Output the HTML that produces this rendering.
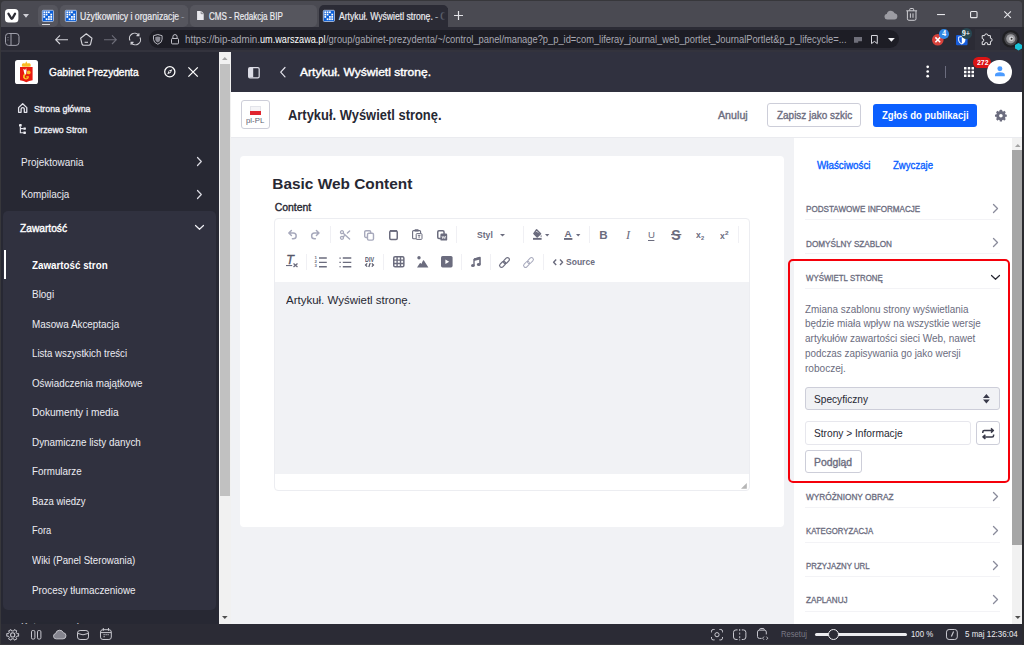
<!DOCTYPE html>
<html lang="pl">
<head>
<meta charset="utf-8">
<title>Artykuł. Wyświetl stronę.</title>
<style>
*{box-sizing:border-box;margin:0;padding:0}
html,body{width:1024px;height:645px;overflow:hidden;background:#37373b}
body{position:relative;font-family:"Liberation Sans",sans-serif;font-size:12px;color:#272833}
.a{position:absolute}
.t{position:absolute;white-space:pre;line-height:1;transform-origin:0 0}
svg{position:absolute;overflow:visible}
/* chrome */
#tabbar{left:1px;top:1.4px;width:1021.4px;height:25.6px;background:#4a4a52;border-radius:3.5px 3.5px 0 0}
#addr{left:1px;top:27px;width:1022px;height:24px;background:#2b2b35}
#addrline{left:1px;top:49.8px;width:1022px;height:1.8px;background:#33333d}
#status{left:1px;top:624px;width:1022px;height:20px;background:#2b2b35}
.tab{position:absolute;top:4.8px;height:22.1px;background:#56565e;border-radius:5px}
.tab.on{background:#2b2b35;border-radius:5px 5px 0 0;height:23px}
#url{left:149px;top:30px;width:750px;height:18px;border-radius:9px;background:#1d1d25}
/* page */
#side{left:1px;top:51.5px;width:218px;height:572.5px;background:#272833;overflow:hidden}
#sidepanel{left:3.4px;top:211px;width:212.6px;height:399px;background:#30313f;border-radius:5px}
#sidemark{left:3.5px;top:250.4px;width:2.5px;height:28.6px;background:#fff}
#sidescroll{left:219px;top:51.5px;width:12px;height:572.5px;background:#f1f1f1}
#sidethumb{left:219.8px;top:63.7px;width:10.2px;height:432.3px;background:#c1c1c1}
#ctl{left:231px;top:51.5px;width:792px;height:40.2px;background:#30313f}
#tool{left:231px;top:91.7px;width:792px;height:46.4px;background:#fff;border-bottom:.6px solid #eaebef}
#bg{left:231px;top:138px;width:563px;height:486px;background:#f1f2f5}
#card{left:240px;top:156px;width:544px;height:370.6px;background:#fff;border-radius:4px}
#right{left:794px;top:138px;width:218.3px;height:486px;background:#fff}
#rscroll{left:1012.3px;top:138px;width:9.9px;height:486px;background:#f1f1f1}
#rthumb{left:1012.4px;top:150.3px;width:9.8px;height:395.2px;background:#a6a6a6}
.btn{position:absolute;border:1px solid #cdced9;border-radius:3px;background:#fff}
.sep{position:absolute;left:805.4px;width:195px;height:1px;background:#f3f3f6}
.vd{position:absolute;width:1px;height:16px;background:#e7e7ed}
#editor{left:274px;top:217.5px;width:475.5px;height:273.8px;border:1px solid #ecedf1;border-radius:4px;background:#fff}
#edarea{left:275px;top:282px;width:473.5px;height:191.6px;background:#f1f2f5}
#red{left:788.2px;top:258.9px;width:221.6px;height:224.3px;border:2.4px solid #f5000a;border-radius:5px}
</style>
</head>
<body>
<!-- browser chrome -->
<div id="tabbar" class="a"></div>
<div id="addr" class="a"></div>
<div id="addrline" class="a"></div>
<div id="status" class="a"></div>
<div class="tab" style="left:38px;width:20px"></div>
<div class="tab" style="left:60px;width:128px"></div>
<div class="tab" style="left:190px;width:127px"></div>
<div class="tab on" style="left:319px;width:129px"></div>
<div id="url" class="a"></div>
<svg style="left:4.9px;top:8.8px" width="13.4" height="13.6" viewBox="0 0 13.4 13.6"><rect width="13.4" height="13.6" rx="3.6" fill="#fff"/><path d="M3.4 4.6 L6.4 9.6 Q6.9 10.1 7.4 9.4 L10.1 4.6" fill="none" stroke="#2e2e36" stroke-width="2.2" stroke-linecap="round" stroke-linejoin="round"/></svg>
<svg style="left:23.3px;top:14px" width="6" height="3.8" viewBox="0 0 6 3.8"><path d="M0 0H6L3 3.8Z" fill="#d0d0d6"/></svg>
<svg style="left:42.2px;top:9.7px" width="11.8" height="11.8" viewBox="0 0 11.8 11.8"><rect x=".3" y=".3" width="11.200000000000001" height="11.200000000000001" rx="1" fill="#0b5fd8" stroke="#d6e0f3" stroke-width=".7"/><rect x="1.40" y="1.40" width="1.76" height="1.76" fill="#fff"/><rect x="3.71" y="1.40" width="1.76" height="1.76" fill="#fff"/><rect x="6.02" y="1.40" width="1.76" height="1.76" fill="#fff"/><rect x="1.40" y="3.71" width="1.76" height="1.76" fill="#fff"/><rect x="3.71" y="3.71" width="1.76" height="1.76" fill="#fff"/><rect x="8.34" y="3.71" width="1.76" height="1.76" fill="#fff"/><rect x="1.40" y="6.02" width="1.76" height="1.76" fill="#fff"/><rect x="6.02" y="6.02" width="1.76" height="1.76" fill="#fff"/><rect x="8.34" y="6.02" width="1.76" height="1.76" fill="#fff"/><rect x="3.71" y="8.34" width="1.76" height="1.76" fill="#fff"/><rect x="6.02" y="8.34" width="1.76" height="1.76" fill="#fff"/><rect x="8.34" y="8.34" width="1.76" height="1.76" fill="#fff"/></svg>
<div class="a" style="left:41.6px;top:24.1px;width:8.6px;height:1.3px;background:#dcdce0"></div>
<svg style="left:64.5px;top:9.7px" width="11.8" height="11.8" viewBox="0 0 11.8 11.8"><rect x=".3" y=".3" width="11.200000000000001" height="11.200000000000001" rx="1" fill="#0b5fd8" stroke="#d6e0f3" stroke-width=".7"/><rect x="1.40" y="1.40" width="1.76" height="1.76" fill="#fff"/><rect x="3.71" y="1.40" width="1.76" height="1.76" fill="#fff"/><rect x="6.02" y="1.40" width="1.76" height="1.76" fill="#fff"/><rect x="1.40" y="3.71" width="1.76" height="1.76" fill="#fff"/><rect x="3.71" y="3.71" width="1.76" height="1.76" fill="#fff"/><rect x="8.34" y="3.71" width="1.76" height="1.76" fill="#fff"/><rect x="1.40" y="6.02" width="1.76" height="1.76" fill="#fff"/><rect x="6.02" y="6.02" width="1.76" height="1.76" fill="#fff"/><rect x="8.34" y="6.02" width="1.76" height="1.76" fill="#fff"/><rect x="3.71" y="8.34" width="1.76" height="1.76" fill="#fff"/><rect x="6.02" y="8.34" width="1.76" height="1.76" fill="#fff"/><rect x="8.34" y="8.34" width="1.76" height="1.76" fill="#fff"/></svg>
<svg style="left:323.2px;top:9.7px" width="11.8" height="11.8" viewBox="0 0 11.8 11.8"><rect x=".3" y=".3" width="11.200000000000001" height="11.200000000000001" rx="1" fill="#0b5fd8" stroke="#d6e0f3" stroke-width=".7"/><rect x="1.40" y="1.40" width="1.76" height="1.76" fill="#fff"/><rect x="3.71" y="1.40" width="1.76" height="1.76" fill="#fff"/><rect x="6.02" y="1.40" width="1.76" height="1.76" fill="#fff"/><rect x="1.40" y="3.71" width="1.76" height="1.76" fill="#fff"/><rect x="3.71" y="3.71" width="1.76" height="1.76" fill="#fff"/><rect x="8.34" y="3.71" width="1.76" height="1.76" fill="#fff"/><rect x="1.40" y="6.02" width="1.76" height="1.76" fill="#fff"/><rect x="6.02" y="6.02" width="1.76" height="1.76" fill="#fff"/><rect x="8.34" y="6.02" width="1.76" height="1.76" fill="#fff"/><rect x="3.71" y="8.34" width="1.76" height="1.76" fill="#fff"/><rect x="6.02" y="8.34" width="1.76" height="1.76" fill="#fff"/><rect x="8.34" y="8.34" width="1.76" height="1.76" fill="#fff"/></svg>
<svg style="left:196.8px;top:11.2px" width="6.8" height="8.9" viewBox="0 0 7.2 9.6"><path d="M0 0H4.6L7.2 2.6V9.6H0Z" fill="#e9e9ee"/><path d="M4.4 0.3V2.9H7" fill="none" stroke="#56565e" stroke-width="0.7"/></svg>
<svg style="left:453.5px;top:11.2px" width="9" height="9" viewBox="0 0 9 9"><path d="M4.5 0V9M0 4.5H9" stroke="#e4e4e8" stroke-width="1.2" fill="none"/></svg>
<svg style="left:883.5px;top:10.2px" width="14" height="10" viewBox="0 0 14 10.4"><path d="M3.2 10a2.9 2.9 0 0 1-.6-5.75a4.3 4.3 0 0 1 8.2-.9a3.35 3.35 0 0 1-.3 6.65Z" fill="#9c9ca3"/></svg>
<svg style="left:906.3px;top:8px" width="11.4" height="12.8" viewBox="0 0 11.4 12.8" fill="none" stroke="#cfcfd4" stroke-width="1"><path d="M0.3 2.8H11.1M3.8 2.6V1.2Q3.8 .5 4.5 .5H6.9Q7.6 .5 7.6 1.2V2.6M1.4 3V10.8Q1.4 12.3 2.9 12.3H8.5Q10 12.3 10 10.8V3M4.4 5.4V9.8M7 5.4V9.8"/></svg>
<svg style="left:937px;top:13.8px" width="8" height="1.2" viewBox="0 0 8 1.2"><rect width="8" height="1.1" fill="#e6e6ea"/></svg>
<svg style="left:970.3px;top:10.8px" width="7.6" height="7.2" viewBox="0 0 7.6 7.2"><rect x=".55" y=".55" width="6.5" height="6.1" rx="1" fill="none" stroke="#e6e6ea" stroke-width="1.1"/></svg>
<svg style="left:1003.9px;top:10.8px" width="7.2" height="7.2" viewBox="0 0 7.2 7.2"><path d="M.3 .3L6.9 6.9M6.9 .3L.3 6.9" stroke="#e6e6ea" stroke-width="1.1" fill="none"/></svg>
<svg style="left:5.4px;top:33px" width="14.5" height="12.9" viewBox="0 0 14.5 12.9" fill="none" stroke="#a2a2ad" stroke-width="1"><rect x=".5" y=".5" width="13.5" height="11.9" rx="3"/><path d="M6 .5V12.4"/><path d="M3 4.2v.8M3 6.6v.8" stroke-width="0.9"/></svg>
<svg style="left:54.8px;top:34.5px" width="13" height="9.4" viewBox="0 0 13 9.4" fill="none" stroke="#d4d4da" stroke-width="1.1"><path d="M13 4.7H.8M5 .4L.7 4.7L5 9"/></svg>
<svg style="left:80px;top:32.8px" width="12.6" height="12.8" viewBox="0 0 12.6 12.8" fill="none" stroke="#d4d4da" stroke-width="1.1"><path d="M6.3 .7L12 5.2L10.6 11Q10.3 12.2 9 12.2H3.6Q2.3 12.2 2 11L.6 5.2Z" stroke-linejoin="round"/><path d="M4.6 9.3H8"/></svg>
<svg style="left:104.3px;top:34.5px" width="13" height="9.4" viewBox="0 0 13 9.4" fill="none" stroke="#6d6d78" stroke-width="1.1"><path d="M0 4.7H12.2M8 .4L12.3 4.7L8 9"/></svg>
<svg style="left:129.3px;top:33.3px" width="12" height="12" viewBox="0 0 12 12" fill="none" stroke="#d4d4da" stroke-width="1.1"><path d="M1 7.6A5.1 5.1 0 0 1 9.6 2.2"/><path d="M11 4.4A5.1 5.1 0 0 1 2.4 9.8"/><path d="M9.9 .2V2.6H7.5M2.1 11.8V9.4H4.5"/></svg>
<svg style="left:153.2px;top:34px" width="9.6" height="10.8" viewBox="0 0 9.6 10.8"><path d="M4.8 .5L9.1 1.7V5.3Q9.1 8.6 4.8 10.3Q.5 8.6 .5 5.3V1.7Z" fill="none" stroke="#b8b8c0" stroke-width="1"/><path d="M4.8 2.4L7.3 3.1V5.4Q7.3 7.4 4.8 8.5Q2.3 7.4 2.3 5.4V3.1Z" fill="#8a8a94"/></svg>
<svg style="left:170.8px;top:33.8px" width="8" height="10.4" viewBox="0 0 8 10.4" fill="none" stroke="#c4c4cc" stroke-width="1"><rect x=".5" y="4.5" width="7" height="5.4" rx="1"/><path d="M1.9 4.5V2.7A2.1 2.1 0 0 1 6.1 2.7V4.5"/></svg>
<svg style="left:854px;top:36.5px" width="8" height="5.8" viewBox="0 0 8 5.8"><path d="M0 0H8V4.2H4.2V5.8H0Z" fill="#6f6f7a"/></svg>
<svg style="left:870.6px;top:34.6px" width="6.8" height="9.4" viewBox="0 0 6.8 9.4"><path d="M.5 .5H6.3V8.6L3.4 6.4L.5 8.6Z" fill="none" stroke="#d8d8de" stroke-width="1"/></svg>
<svg style="left:887.6px;top:38px" width="6.8" height="3.8" viewBox="0 0 6.8 3.8"><path d="M0 0H6.8L3.4 3.8Z" fill="#f2f2f5"/></svg>
<svg style="left:932.2px;top:33.7px" width="11.6" height="11.6" viewBox="0 0 11.6 11.6"><circle cx="5.8" cy="5.8" r="5.8" fill="#d8423b"/><path d="M3.4 3.4L8.2 8.2M8.2 3.4L3.4 8.2" stroke="#fff" stroke-width="1.5" fill="none"/></svg>
<div class="a" style="left:939.4px;top:29px;width:9.6px;height:9.6px;border-radius:50%;background:#3187e4"></div>
<svg style="left:956.4px;top:35px" width="11.6" height="10.2" viewBox="0 0 11.6 10.2"><rect width="11.6" height="10.2" rx="1.2" fill="#175ddc"/><path d="M5.8 1L9.4 1.8V5Q9.4 7.8 5.8 9.4Q2.2 7.8 2.2 5V1.8Z" fill="#fff"/><path d="M5.8 1.9V8.4Q3.1 7.1 3.1 5V2.5Z" fill="#175ddc"/></svg>
<div class="a" style="left:960.9px;top:28.3px;width:11.6px;height:11px;border-radius:50%;background:#274651"></div>
<div class="a" style="left:974.8px;top:28.5px;width:25.4px;height:21.5px;background:#30303a"></div>
<svg style="left:980px;top:33.2px" width="13" height="12.6" viewBox="0 0 13 12.6"><path d="M4.6 2.6A1.7 1.7 0 1 1 8 2.6H10.4V5.2A1.7 1.7 0 1 1 10.4 8.6V11.6H7.6A1.5 1.5 0 1 0 4.8 11.6H2.2V8.8A1.6 1.6 0 1 0 2.2 5.6V2.6Z" fill="none" stroke="#e8e8ec" stroke-width="1" stroke-linejoin="round"/></svg>
<svg style="left:1002.2px;top:29.8px" width="17.6" height="17.6" viewBox="0 0 17.6 17.6"><circle cx="8.8" cy="8.8" r="8.8" fill="#1f1f22"/><circle cx="8.8" cy="8.8" r="6.6" fill="#4a4a4e"/><circle cx="8.8" cy="8.8" r="4.6" fill="#9a9a9e"/><circle cx="9.3" cy="8.8" r="2.3" fill="#d8d8da"/><circle cx="9.6" cy="8.8" r="1" fill="#333"/></svg>
<svg style="left:1014.8px;top:43.4px" width="7" height="7.4" viewBox="0 0 7 7.4"><path d="M3.5 0L7 1.9V5.5L3.5 7.4L0 5.5V1.9Z" fill="#19c3d8"/></svg>
<svg style="left:5.7px;top:628.7px" width="13.4" height="11.8" viewBox="0 0 13.4 11.8" fill="none" stroke="#c9c9d0" stroke-width="1"><path d="M12.62 4.57L12.62 7.23L11.03 7.02L9.94 8.71L10.94 9.85L8.38 11.18L7.79 9.83L5.61 9.83L5.02 11.18L2.46 9.85L3.46 8.71L2.37 7.02L0.78 7.23L0.78 4.57L2.37 4.78L3.46 3.09L2.46 1.95L5.02 0.62L5.61 1.97L7.79 1.97L8.38 0.62L10.94 1.95L9.94 3.09L11.03 4.78Z" stroke-linejoin="round"/><circle cx="6.7" cy="5.9" r="2.1" stroke-width="1.1"/></svg>
<svg style="left:31.3px;top:630.2px" width="10.4" height="9.6" viewBox="0 0 10.4 9.6" fill="none" stroke="#c9c9d0" stroke-width="1"><rect x=".5" y=".5" width="3.4" height="8.6" rx="1.3"/><rect x="6.5" y=".5" width="3.4" height="8.6" rx="1.3"/></svg>
<svg style="left:52.7px;top:629.1px" width="13.6" height="10.6" viewBox="-0.3 -0.4 14.6 11"><path d="M3.2 10a2.9 2.9 0 0 1-.6-5.75a4.3 4.3 0 0 1 8.2-.9a3.35 3.35 0 0 1-.3 6.65Z" fill="#85858f" stroke="#c9c9d0" stroke-width="1"/></svg>
<svg style="left:77px;top:630px" width="12" height="10" viewBox="0 0 12 10" fill="none" stroke="#c9c9d0" stroke-width="1"><rect x=".5" y=".5" width="11" height="9" rx="2.6"/><path d="M.6 3.4Q6 6.2 11.4 3.4"/></svg>
<svg style="left:99.6px;top:628.4px" width="11.8" height="12" viewBox="0 0 11.8 12" fill="none" stroke="#c9c9d0" stroke-width="1"><rect x=".5" y="1.7" width="10.8" height="9.8" rx="2.4"/><path d="M.6 4.6H11.2M3.3 0V2.8M8.5 0V2.8"/><path d="M3.6 6.6H4.6M5.6 6.6H6.6M7.6 6.6H8.6M3.6 8.6H4.6" stroke-width="1.1"/></svg>
<svg style="left:710.5px;top:628.6px" width="12" height="11.4" viewBox="0 0 12 11.4" fill="none" stroke="#c9c9d0" stroke-width="1"><path d="M.5 3.4V2.2Q.5 .5 2.2 .5H3.6M8.4 .5H9.8Q11.5 .5 11.5 2.2V3.4M11.5 8V9.2Q11.5 10.9 9.8 10.9H8.4M3.6 10.9H2.2Q.5 10.9 .5 9.2V8"/><circle cx="6" cy="5.7" r="2.1"/></svg>
<svg style="left:732.6px;top:628.6px" width="13.4" height="11.4" viewBox="0 0 13.4 11.4" fill="none" stroke="#c9c9d0" stroke-width="1"><path d="M4.6 .9H3Q.5 .9 .5 3.4V8Q.5 10.5 3 10.5H4.6M8.8 .9H10.4Q12.9 .9 12.9 3.4V8Q12.9 10.5 10.4 10.5H8.8"/><path d="M6.7 0V2M6.7 3.6V5.6M6.7 7.2V9.2M6.7 10.4V11.4" stroke-width=".9"/></svg>
<svg style="left:757.4px;top:628px" width="11.6" height="12.6" viewBox="0 0 11.6 12.6" fill="none" stroke="#c9c9d0" stroke-width="1"><path d="M2.6 2.2V1.6Q2.6 .5 3.7 .5H6.2Q7.3 .5 7.3 1.6V2.2"/><path d="M4.6 10.4H2.4Q.5 10.4 .5 8.5V4Q.5 2.1 2.4 2.1H7.4Q9.3 2.1 9.3 4V6.4"/><path d="M7 8.6L5.6 10.2L7 11.8M9.4 8.6L10.8 10.2L9.4 11.8" stroke-width=".9"/></svg>
<div class="a" style="left:814.6px;top:632.9px;width:92.7px;height:3px;border-radius:1.5px;background:#ededf0"></div>
<div class="a" style="left:827.8px;top:628.7px;width:11.4px;height:11.4px;border-radius:50%;background:#2b2b35;border:1.4px solid #ededf0"></div>
<svg style="left:946.2px;top:629px" width="11.8" height="11" viewBox="0 0 11.8 11" fill="none" stroke="#c9c9d0" stroke-width="1"><rect x=".5" y=".5" width="10.8" height="10" rx="2.6"/><path d="M5.4 7.4L7.6 2.6" stroke-width="1.2"/></svg>

<!-- page -->
<div id="side" class="a"></div>
<div id="sidepanel" class="a"></div>
<div id="sidemark" class="a"></div>
<div id="sidescroll" class="a"></div>
<div id="sidethumb" class="a"></div>
<div id="ctl" class="a"></div>
<div id="tool" class="a"></div>
<div id="bg" class="a"></div>
<div id="card" class="a"></div>
<div id="right" class="a"></div>
<div id="rscroll" class="a"></div>
<div id="rthumb" class="a"></div>
<div class="a" style="left:1022.2px;top:27px;width:1.8px;height:618px;background:#2a2a2e"></div>

<div class="btn" style="left:241px;top:100px;width:29px;height:29.4px"></div>
<div class="a" style="left:249.7px;top:106.3px;width:11.8px;height:4.4px;background:#f4f4f7;border:.5px solid #e3e4ea;border-bottom:0"></div>
<div class="a" style="left:249.7px;top:110.6px;width:11.8px;height:4.4px;background:#e0242f"></div>
<div class="btn" style="left:767.4px;top:103.4px;width:93.7px;height:23.3px"></div>
<div class="a" style="left:872.7px;top:103.5px;width:104.8px;height:23.2px;border-radius:3px;background:#0b5fff"></div>

<div id="editor" class="a"></div>
<div id="edarea" class="a"></div>

<div class="sep" style="top:218.6px"></div>
<div class="sep" style="top:253.3px"></div>
<div class="sep" style="top:288px"></div>
<div class="sep" style="top:507.3px"></div>
<div class="sep" style="top:541.6px"></div>
<div class="sep" style="top:576.3px"></div>
<div class="sep" style="top:611px"></div>
<div class="a" style="left:805.3px;top:387.3px;width:194.5px;height:22.5px;border:1px solid #cdced9;border-radius:3px;background:#f1f2f5"></div>
<div class="a" style="left:805.3px;top:421.3px;width:165.5px;height:23.5px;border:1px solid #e7e7ed;border-radius:3px;background:#fff"></div>
<div class="btn" style="left:976.3px;top:421.3px;width:23.5px;height:23.5px"></div>
<div class="btn" style="left:805.3px;top:450.4px;width:56.4px;height:22.4px"></div>
<div id="red" class="a"></div>
<div class="a" style="left:14.8px;top:60px;width:23.3px;height:23.8px;border-radius:2.6px;background:#fff"></div>
<svg style="left:20px;top:61px" width="12.6" height="21.4" viewBox="0 0 12.6 21.4" ><path d="M2 5.4Q1.4 2.6 3.4 2.2Q4.6 2 5.2 2.6Q5.8 1.2 6.3 .2Q6.8 1.2 7.4 2.6Q8 2 9.2 2.2Q11.2 2.6 10.6 5.4Q6.3 6.2 2 5.4Z" fill="#f9b924"/><path d="M0 6H12.6V19.2Q9 19.6 6.3 21.2Q3.600 19.600 0 19.200Z" fill="#e8190f"/><path d="M4.6 12.600Q2.400 14.400 3 16.400Q3.800 18.600 6.400 18.400Q9 18 9 15.200L6.200 15.200L6.200 16.400L7.400 16.400Q7.200 17.200 6.200 17.200Q4.600 17 4.800 15.400Q5 14.200 6.200 13.200Z" fill="#f9b924"/><path d="M5.2 7.800L3.600 9.800L4.600 13.200L6.200 13.200L6.400 10.400L7.200 9.600L6 9.400Z" fill="#fff"/><circle cx="8.700" cy="11.400" r="1.900" fill="#f9b924"/><path d="M3.200 8L4.400 10M6.400 7.600L5.800 9.400" stroke="#fff" stroke-width=".6"/></svg>
<svg style="left:164.1px;top:66.2px" width="11.6" height="11.6" viewBox="0 0 11.6 11.6" ><circle cx="5.800" cy="5.800" r="5.100" fill="none" stroke="#fff" stroke-width="1.300"/><path d="M8.300 3.300L6.800 6.800L3.300 8.300L4.800 4.800Z" fill="#fff"/><circle cx="5.800" cy="5.800" r=".8" fill="#272833"/></svg>
<svg style="left:187.9px;top:67px" width="10.2" height="10" viewBox="0 0 10.2 10" ><path d="M.4 .4L9.800 9.600M9.800 .4L.4 9.600" stroke="#fff" stroke-width="1.300" fill="none"/></svg>
<svg style="left:18px;top:102.7px" width="9.4" height="9.9" viewBox="0 0 9.4 9.9" ><path d="M.6 9.300V4.600L4.700 .7L8.800 4.600V9.300H6.300V6.200A1.600 1.600 0 0 0 3.100 6.200V9.300Z" fill="none" stroke="#e4e4ec" stroke-width="1.300" stroke-linejoin="round"/></svg>
<svg style="left:19.4px;top:124px" width="7" height="10.2" viewBox="0 0 7 10.2" ><rect x="0" y="0" width="2.700" height="2.600" rx=".5" fill="#f0f0f5"/><rect x="4.300" y="3.400" width="2.600" height="2.400" rx=".5" fill="#f0f0f5"/><rect x="4.300" y="7.600" width="2.600" height="2.400" rx=".5" fill="#f0f0f5"/><path d="M1.350 2.400V8.800H4.600M1.350 4.600H4.600" fill="none" stroke="#e4e4ec" stroke-width="1.150"/></svg>
<svg style="left:197px;top:157.3px" width="4.8" height="9" viewBox="0 0 4.8 9" ><path d="M.5 .5L4.3 4.5L.5 8.5" fill="none" stroke="#dcdce4" stroke-width="1.2" stroke-linejoin="round" stroke-linecap="round"/></svg>
<svg style="left:197px;top:189.8px" width="4.8" height="9" viewBox="0 0 4.8 9" ><path d="M.5 .5L4.3 4.5L.5 8.5" fill="none" stroke="#dcdce4" stroke-width="1.2" stroke-linejoin="round" stroke-linecap="round"/></svg>
<svg style="left:195px;top:225.4px" width="9" height="4.8" viewBox="0 0 9 4.8" ><path d="M.5 .5L4.5 4.3L8.5 .5" fill="none" stroke="#f0f0f5" stroke-width="1.2" stroke-linejoin="round" stroke-linecap="round"/></svg>
<svg style="left:222.3px;top:57px" width="5.6" height="3" viewBox="0 0 5.6 3" ><path d="M0 3L2.800 0L5.600 3Z" fill="#a3a3a3"/></svg>
<svg style="left:222.3px;top:616.4px" width="5.6" height="3" viewBox="0 0 5.6 3" ><path d="M0 0L2.800 3L5.600 0Z" fill="#505050"/></svg>
<svg style="left:1014.8px;top:143.5px" width="5.6" height="3" viewBox="0 0 5.6 3" ><path d="M0 3L2.800 0L5.600 3Z" fill="#a3a3a3"/></svg>
<svg style="left:1014.8px;top:616.4px" width="5.6" height="3" viewBox="0 0 5.6 3" ><path d="M0 0L2.800 3L5.600 0Z" fill="#505050"/></svg>
<svg style="left:248px;top:66.6px" width="11.8" height="11.4" viewBox="0 0 11.8 11.4" ><rect x=".6" y=".6" width="10.600" height="10.200" rx="1.400" fill="#30313f" stroke="#dcdce6" stroke-width="1.200"/><path d="M1 1H5.200V10.400H1Z" fill="#dcdce6"/></svg>
<svg style="left:279.9px;top:67.3px" width="5.6" height="10.4" viewBox="0 0 5.6 10.4" ><path d="M5 .5L.7 5.200L5 9.900" fill="none" stroke="#e4e4ec" stroke-width="1.200" stroke-linecap="round" stroke-linejoin="round"/></svg>
<svg style="left:926px;top:65px" width="3.4" height="13" viewBox="0 0 3.4 13" ><circle cx="1.700" cy="1.800" r="1.350" fill="#fff"/><circle cx="1.700" cy="6.500" r="1.350" fill="#fff"/><circle cx="1.700" cy="11.200" r="1.350" fill="#fff"/></svg>
<div class="a" style="left:945px;top:66px;width:1px;height:11.700px;background:#6b6c7e"></div>
<svg style="left:963.9px;top:67px" width="10" height="10" viewBox="0 0 10 10" ><rect x="0.00" y="0.00" width="2.500" height="2.500" rx=".3" fill="#fff"/><rect x="3.75" y="0.00" width="2.500" height="2.500" rx=".3" fill="#fff"/><rect x="7.50" y="0.00" width="2.500" height="2.500" rx=".3" fill="#fff"/><rect x="0.00" y="3.75" width="2.500" height="2.500" rx=".3" fill="#fff"/><rect x="3.75" y="3.75" width="2.500" height="2.500" rx=".3" fill="#fff"/><rect x="7.50" y="3.75" width="2.500" height="2.500" rx=".3" fill="#fff"/><rect x="0.00" y="7.50" width="2.500" height="2.500" rx=".3" fill="#fff"/><rect x="3.75" y="7.50" width="2.500" height="2.500" rx=".3" fill="#fff"/><rect x="7.50" y="7.50" width="2.500" height="2.500" rx=".3" fill="#fff"/></svg>
<div class="a" style="left:973px;top:57.200px;width:18.400px;height:10.500px;border-radius:5.200px;background:#da1414"></div>
<div class="a" style="left:987.200px;top:59.700px;width:24.600px;height:24.600px;border-radius:50%;background:#fff"></div>
<svg style="left:994.6px;top:66.4px" width="9.8" height="10.2" viewBox="0 0 9.8 10.2" ><circle cx="4.900" cy="2.700" r="2.500" fill="#4b9bff"/><path d="M0 10.200V8.800Q0 6.200 4.900 6.200Q9.800 6.200 9.800 8.800V10.200Z" fill="#4b9bff"/></svg>
<svg style="left:994.6px;top:110px" width="11.8" height="11.4" viewBox="0 0 11.8 11.4" ><g transform="translate(5.900 5.700)"><circle r="3.250" fill="none" stroke="#6b6c7e" stroke-width="2.900"/><rect x="-1.150" y="-5.900" width="2.300" height="2.600" rx=".4" fill="#6b6c7e" transform="rotate(0)"/><rect x="-1.150" y="-5.900" width="2.300" height="2.600" rx=".4" fill="#6b6c7e" transform="rotate(45)"/><rect x="-1.150" y="-5.900" width="2.300" height="2.600" rx=".4" fill="#6b6c7e" transform="rotate(90)"/><rect x="-1.150" y="-5.900" width="2.300" height="2.600" rx=".4" fill="#6b6c7e" transform="rotate(135)"/><rect x="-1.150" y="-5.900" width="2.300" height="2.600" rx=".4" fill="#6b6c7e" transform="rotate(180)"/><rect x="-1.150" y="-5.900" width="2.300" height="2.600" rx=".4" fill="#6b6c7e" transform="rotate(225)"/><rect x="-1.150" y="-5.900" width="2.300" height="2.600" rx=".4" fill="#6b6c7e" transform="rotate(270)"/><rect x="-1.150" y="-5.900" width="2.300" height="2.600" rx=".4" fill="#6b6c7e" transform="rotate(315)"/></g></svg>
<svg style="left:993.1px;top:203.7px" width="5" height="9" viewBox="0 0 5 9" ><path d="M.5 .5L4.5 4.5L.5 8.5" fill="none" stroke="#8a8b9b" stroke-width="1.3" stroke-linejoin="round" stroke-linecap="round"/></svg>
<svg style="left:993.1px;top:238.3px" width="5" height="9" viewBox="0 0 5 9" ><path d="M.5 .5L4.5 4.5L.5 8.5" fill="none" stroke="#8a8b9b" stroke-width="1.3" stroke-linejoin="round" stroke-linecap="round"/></svg>
<svg style="left:991px;top:274.8px" width="9" height="4.8" viewBox="0 0 9 4.8" ><path d="M.5 .5L4.5 4.3L8.5 .5" fill="none" stroke="#272833" stroke-width="1.2" stroke-linejoin="round" stroke-linecap="round"/></svg>
<svg style="left:993.1px;top:491.5px" width="5" height="9" viewBox="0 0 5 9" ><path d="M.5 .5L4.5 4.5L.5 8.5" fill="none" stroke="#8a8b9b" stroke-width="1.3" stroke-linejoin="round" stroke-linecap="round"/></svg>
<svg style="left:993.1px;top:526.1px" width="5" height="9" viewBox="0 0 5 9" ><path d="M.5 .5L4.5 4.5L.5 8.5" fill="none" stroke="#8a8b9b" stroke-width="1.3" stroke-linejoin="round" stroke-linecap="round"/></svg>
<svg style="left:993.1px;top:560.7px" width="5" height="9" viewBox="0 0 5 9" ><path d="M.5 .5L4.5 4.5L.5 8.5" fill="none" stroke="#8a8b9b" stroke-width="1.3" stroke-linejoin="round" stroke-linecap="round"/></svg>
<svg style="left:993.1px;top:595.4px" width="5" height="9" viewBox="0 0 5 9" ><path d="M.5 .5L4.5 4.5L.5 8.5" fill="none" stroke="#8a8b9b" stroke-width="1.3" stroke-linejoin="round" stroke-linecap="round"/></svg>
<svg style="left:983.2px;top:394px" width="6.8" height="9.4" viewBox="0 0 6.8 9.4" ><path d="M0 3.900L3.400 0L6.800 3.900ZM0 5.500L3.400 9.400L6.800 5.500Z" fill="#393a4a"/></svg>
<svg style="left:981.8px;top:427.6px" width="12.4" height="11.4" viewBox="0 0 12.4 11.4" ><path d="M.8 5V4Q.8 2.500 2.300 2.500H11.200M9 .4L11.400 2.500L9 4.600M11.600 6.400V7.400Q11.600 8.900 10.100 8.900H1.200M3.400 6.800L1 8.900L3.400 11" fill="none" stroke="#393a4a" stroke-width="1.500" stroke-linejoin="round"/></svg>
<svg style="left:740.8px;top:482.8px" width="5.8" height="5.8" viewBox="0 0 5.8 5.8" ><path d="M5.800 0V5.800H0Z" fill="#b5b5b5"/></svg>
<div class="a" style="left:330.4px;top:226.4px;width:1px;height:16.3px;background:#f0f0f4"></div>
<div class="a" style="left:456.2px;top:226.4px;width:1px;height:16.3px;background:#f0f0f4"></div>
<div class="a" style="left:522.5px;top:226.4px;width:1px;height:16.3px;background:#f0f0f4"></div>
<div class="a" style="left:589.1px;top:226.4px;width:1px;height:16.3px;background:#f0f0f4"></div>
<div class="a" style="left:738.2px;top:226.4px;width:1px;height:16.3px;background:#f0f0f4"></div>
<div class="a" style="left:306.1px;top:253.6px;width:1px;height:16.7px;background:#f0f0f4"></div>
<div class="a" style="left:383.3px;top:253.6px;width:1px;height:16.7px;background:#f0f0f4"></div>
<div class="a" style="left:461.0px;top:253.6px;width:1px;height:16.7px;background:#f0f0f4"></div>
<div class="a" style="left:490.3px;top:253.6px;width:1px;height:16.7px;background:#f0f0f4"></div>
<div class="a" style="left:543.0px;top:253.6px;width:1px;height:16.7px;background:#f0f0f4"></div>
<svg style="left:287.5px;top:229.6px" width="8.8" height="9.2" viewBox="0 0 8.8 9.2" ><path d="M3.400 .6L.8 3.200L3.400 5.800M1 3.200H5.200A3 3 0 0 1 5.200 9.200H4.400" fill="none" stroke="#a7a9bc" stroke-width="1.450" stroke-linejoin="round" stroke-linecap="round" transform="scale(1 .95)"/></svg>
<svg style="left:311.4px;top:229.6px" width="8.8" height="9.2" viewBox="0 0 8.8 9.2" ><path d="M5.400 .6L8 3.200L5.400 5.800M7.800 3.200H3.600A3 3 0 0 0 3.600 9.200H4.400" fill="none" stroke="#a7a9bc" stroke-width="1.450" stroke-linejoin="round" stroke-linecap="round" transform="scale(1 .95)"/></svg>
<svg style="left:340.1px;top:229.6px" width="10" height="10" viewBox="0 0 10 10" ><circle cx="2" cy="2.200" r="1.500" fill="none" stroke="#a7a9bc" stroke-width="1.300"/><circle cx="2" cy="7.800" r="1.500" fill="none" stroke="#a7a9bc" stroke-width="1.300"/><path d="M3.200 3.200L9.600 9M3.200 6.800L5 5.200M7.400 3L9.600 1" stroke="#a7a9bc" stroke-width="1.400" fill="none" stroke-linecap="round"/></svg>
<svg style="left:363.8px;top:229.6px" width="10.2" height="10.4" viewBox="0 0 10.2 10.4" ><rect x=".7" y=".7" width="6" height="6.800" rx="1.300" fill="none" stroke="#a7a9bc" stroke-width="1.400"/><rect x="3.500" y="3.300" width="6" height="6.800" rx="1.300" fill="#fff" stroke="#a7a9bc" stroke-width="1.400"/></svg>
<svg style="left:388.7px;top:230.1px" width="9" height="10.2" viewBox="0 0 9 10.2" ><rect x=".75" y=".9" width="7.500" height="8.600" rx="1.200" fill="none" stroke="#6b6c7e" stroke-width="1.500"/><path d="M1 .9H8" stroke="#6b6c7e" stroke-width="1.800"/></svg>
<svg style="left:412.2px;top:229.2px" width="10.6" height="10.8" viewBox="0 0 10.6 10.8" ><rect x=".6" y="1.600" width="8" height="8.200" rx="1" fill="none" stroke="#6b6c7e" stroke-width="1.100"/><rect x="2.600" y=".2" width="4" height="2.400" rx=".6" fill="#6b6c7e"/><rect x="4.200" y="4.600" width="5.800" height="5.800" rx=".8" fill="#fff" stroke="#6b6c7e" stroke-width="1"/><path d="M5.800 6.400H8.400M7.100 6.400V9.200" stroke="#6b6c7e" stroke-width=".9" fill="none"/></svg>
<svg style="left:436.6px;top:229.6px" width="10.4" height="11" viewBox="0 0 10.4 11" ><rect x=".75" y=".75" width="6.300" height="7.800" rx="1.200" fill="none" stroke="#6b6c7e" stroke-width="1.500"/><rect x="3.400" y="3.600" width="6.800" height="7" rx="1.200" fill="#6b6c7e"/><path d="M5 6L5.800 8.600L6.800 6.400L7.800 8.600L8.600 6" fill="none" stroke="#fff" stroke-width=".75"/></svg>
<svg style="left:500px;top:234.3px" width="5" height="2.6" viewBox="0 0 5 2.6" ><path d="M0 0H5L2.500 2.600Z" fill="#6b6c7e"/></svg>
<svg style="left:533.4px;top:229px" width="9" height="11" viewBox="0 0 9 11" ><path d="M3.600 .7L7.600 4.700L4.200 8L.8 4.600Z" fill="none" stroke="#6b6c7e" stroke-width="1.400" stroke-linejoin="round"/><path d="M1 4.600L3 2.600L6.400 4.200L7.400 4.800L4.200 7.900Z" fill="#6b6c7e"/><path d="M8.100 5.800Q9.300 7.600 8.100 8.200Q6.900 7.600 8.100 5.800Z" fill="#6b6c7e"/><rect x="0" y="8.900" width="8.600" height="1.900" fill="#6b6c7e"/></svg>
<svg style="left:545.4px;top:234.4px" width="4.4" height="2.4" viewBox="0 0 4.4 2.4" ><path d="M0 0H4.400L2.200 2.400Z" fill="#6b6c7e"/></svg>
<svg style="left:563.8px;top:237.9px" width="8.4" height="1.9" viewBox="0 0 8.4 1.9" ><rect width="8.400" height="1.900" fill="#6b6c7e"/></svg>
<svg style="left:575.9px;top:234.4px" width="4.4" height="2.4" viewBox="0 0 4.4 2.4" ><path d="M0 0H4.400L2.200 2.400Z" fill="#6b6c7e"/></svg>
<svg style="left:648.2px;top:239.8px" width="6.4" height="1" viewBox="0 0 6.4 1" ><rect width="6.400" height="1" fill="#6b6c7e"/></svg>
<svg style="left:670.6px;top:234.3px" width="10.4" height="1.2" viewBox="0 0 10.4 1.2" ><rect width="10.400" height="1.200" fill="#6b6c7e"/></svg>
<svg style="left:286.3px;top:265.4px" width="6.2" height="1.1" viewBox="0 0 6.2 1.1" ><rect width="6.200" height="1.100" fill="#6b6c7e"/></svg>
<svg style="left:293.3px;top:263.2px" width="5" height="4.4" viewBox="0 0 5 4.4" ><path d="M.5 .5L4.500 3.900M4.500 .5L.5 3.900" stroke="#6b6c7e" stroke-width="1.300" fill="none"/></svg>
<svg style="left:314.8px;top:256.8px" width="11.8" height="10.6" viewBox="0 0 11.8 10.6" ><path d="M4 1.100H11.800M4 5.400H11.800M4 9.700H11.800" stroke="#6b6c7e" stroke-width="1.450" fill="none"/></svg>
<svg style="left:338.9px;top:256.8px" width="12.3" height="10.6" viewBox="0 0 12.3 10.6" ><path d="M3.800 1.100H12.300M3.800 5.400H12.300M3.800 9.700H12.300" stroke="#6b6c7e" stroke-width="1.450" fill="none"/><path d="M.4 1.100H1.800M.4 5.400H1.800M.4 9.700H1.800" stroke="#6b6c7e" stroke-width="1.100" fill="none"/></svg>
<svg style="left:365px;top:263.3px" width="9" height="4" viewBox="0 0 9 4" ><path d="M2.200 .3L.5 2L2.200 3.700M6.800 .3L8.500 2L6.800 3.700M5.200 0L3.800 4" stroke="#555668" stroke-width="1.200" fill="none"/></svg>
<svg style="left:392.5px;top:256.3px" width="11.6" height="11.6" viewBox="0 0 11.6 11.6" ><rect x=".75" y=".75" width="10.100" height="10.100" rx="1.300" fill="none" stroke="#6b6c7e" stroke-width="1.500"/><path d="M4.100 .7V10.900M7.500 .7V10.900M.7 4.100H10.900M.7 7.500H10.900" stroke="#6b6c7e" stroke-width="1.400" fill="none"/></svg>
<svg style="left:416.7px;top:256.4px" width="11.4" height="11.4" viewBox="0 0 11.4 11.4" ><circle cx="2" cy="1.800" r="1.700" fill="#6b6c7e"/><path d="M0 11.400L2.800 7.200Q3.300 6.600 3.800 7.200L4.400 8L6 4.600Q6.500 3.800 7 4.600L11.400 11.400Z" fill="#6b6c7e"/></svg>
<svg style="left:440.8px;top:256.2px" width="11.4" height="11.7" viewBox="0 0 11.4 11.7" ><rect width="11.600" height="11.400" rx="1.600" fill="#6b6c7e"/><path d="M4.400 3.400L8.200 5.700L4.400 8Z" fill="#fff"/></svg>
<svg style="left:470.7px;top:257px" width="9.6" height="10.4" viewBox="0 0 9.6 10.4" ><path d="M3 2.200L9 .6V7.600" fill="none" stroke="#6b6c7e" stroke-width="1.600" stroke-linejoin="round"/><path d="M3 2V8.400" stroke="#6b6c7e" stroke-width="1.400"/><ellipse cx="1.900" cy="8.600" rx="1.900" ry="1.500" fill="#6b6c7e"/><ellipse cx="7.800" cy="7.600" rx="1.900" ry="1.500" fill="#6b6c7e"/><path d="M3 1.400L9 0V2.600L3 4Z" fill="#6b6c7e"/></svg>
<svg style="left:499.3px;top:256.5px" width="11" height="11" viewBox="0 0 11 11" ><g transform="rotate(-45 5.500 5.500)" fill="none" stroke="#6b6c7e" stroke-width="1.2"><rect x="-.6" y="3.600" width="6.800" height="3.800" rx="1.900"/><rect x="4.800" y="3.600" width="6.800" height="3.800" rx="1.900"/></g></svg>
<svg style="left:523.4px;top:256.5px" width="11" height="11" viewBox="0 0 11 11" ><g transform="rotate(-45 5.500 5.500)" fill="none" stroke="#a7a9bc" stroke-width="1"><rect x="-.6" y="3.600" width="6.800" height="3.800" rx="1.900"/><rect x="4.800" y="3.600" width="6.800" height="3.800" rx="1.900"/></g></svg>
<svg style="left:552.9px;top:258.6px" width="10.2" height="6.4" viewBox="0 0 10.2 6.4" ><path d="M3.200 .5L.6 3.200L3.200 5.900M7 .5L9.600 3.200L7 5.900" stroke="#6b6c7e" stroke-width="1.400" fill="none" stroke-linejoin="round"/></svg>

<span class="t" style="left:49.4px;top:68.3px;font-size:10.3px;color:#ffffff;-webkit-text-stroke:0.36px #ffffff;transform:scaleX(0.984);">Gabinet Prezydenta</span>
<span class="t" style="left:33.5px;top:103.5px;font-size:9.6px;color:#eeeef4;-webkit-text-stroke:0.34px #eeeef4;transform:scaleX(0.921);">Strona główna</span>
<span class="t" style="left:33.5px;top:125.1px;font-size:9.6px;color:#eeeef4;-webkit-text-stroke:0.34px #eeeef4;transform:scaleX(0.912);">Drzewo Stron</span>
<span class="t" style="left:20.5px;top:156.7px;font-size:11px;color:#e9e9f0;transform:scaleX(0.905);">Projektowania</span>
<span class="t" style="left:20.5px;top:189.4px;font-size:11px;color:#e9e9f0;transform:scaleX(0.898);">Kompilacja</span>
<span class="t" style="left:20.4px;top:222.7px;font-size:11px;color:#ffffff;-webkit-text-stroke:0.39px #ffffff;transform:scaleX(0.928);">Zawartość</span>
<span class="t" style="left:32.4px;top:260.5px;font-size:10.2px;color:#ffffff;font-weight:700;transform:scaleX(0.961);">Zawartość stron</span>
<span class="t" style="left:32.4px;top:290.0px;font-size:10.2px;color:#ececf2;transform:scaleX(0.975);">Blogi</span>
<span class="t" style="left:32.4px;top:319.6px;font-size:10.2px;color:#ececf2;transform:scaleX(0.968);">Masowa Akceptacja</span>
<span class="t" style="left:32.4px;top:349.1px;font-size:10.2px;color:#ececf2;transform:scaleX(0.949);">Lista wszystkich treści</span>
<span class="t" style="left:32.4px;top:378.7px;font-size:10.2px;color:#ececf2;transform:scaleX(0.962);">Oświadczenia majątkowe</span>
<span class="t" style="left:32.4px;top:408.2px;font-size:10.2px;color:#ececf2;transform:scaleX(0.993);">Dokumenty i media</span>
<span class="t" style="left:32.4px;top:437.8px;font-size:10.2px;color:#ececf2;transform:scaleX(0.971);">Dynamiczne listy danych</span>
<span class="t" style="left:32.4px;top:467.3px;font-size:10.2px;color:#ececf2;transform:scaleX(0.963);">Formularze</span>
<span class="t" style="left:32.4px;top:496.9px;font-size:10.2px;color:#ececf2;transform:scaleX(0.937);">Baza wiedzy</span>
<span class="t" style="left:32.4px;top:526.4px;font-size:10.2px;color:#ececf2;transform:scaleX(0.916);">Fora</span>
<span class="t" style="left:32.4px;top:556.0px;font-size:10.2px;color:#ececf2;transform:scaleX(0.950);">Wiki (Panel Sterowania)</span>
<span class="t" style="left:32.4px;top:585.5px;font-size:10.2px;color:#ececf2;transform:scaleX(0.968);">Procesy tłumaczeniowe</span>
<span class="t" style="left:20.5px;top:622.0px;font-size:11px;color:#ffffff;transform:scaleX(0.911);clip-path:inset(0 0 8.9px 0);opacity:.8;">Kategoryzacja</span>
<span class="t" style="left:300.0px;top:67.1px;font-size:11.3px;color:#ffffff;-webkit-text-stroke:0.40px #ffffff;transform:scaleX(1.066);">Artykuł. Wyświetl stronę.</span>
<span class="t" style="left:246.2px;top:116.9px;font-size:8px;color:#5c5d70;transform:scaleX(0.979);">pl-PL</span>
<span class="t" style="left:288.0px;top:109.3px;font-size:13.9px;color:#272833;font-weight:700;transform:scaleX(0.931);">Artykuł. Wyświetl stronę.</span>
<span class="t" style="left:718.2px;top:110.8px;font-size:10px;color:#6b6c7e;-webkit-text-stroke:0.35px #6b6c7e;transform:scaleX(1.068);">Anuluj</span>
<span class="t" style="left:776.8px;top:110.8px;font-size:10px;color:#6b6c7e;-webkit-text-stroke:0.35px #6b6c7e;transform:scaleX(0.995);">Zapisz jako szkic</span>
<span class="t" style="left:881.7px;top:110.8px;font-size:10.2px;color:#ffffff;font-weight:700;transform:scaleX(0.938);">Zgłoś do publikacji</span>
<span class="t" style="left:272.3px;top:175.9px;font-size:15.4px;color:#272833;font-weight:700;">Basic Web Content</span>
<span class="t" style="left:274.8px;top:202.9px;font-size:10.4px;color:#272833;-webkit-text-stroke:0.36px #272833;">Content</span>
<span class="t" style="left:476.5px;top:230.0px;font-size:9.5px;color:#6b6c7e;font-weight:700;transform:scaleX(0.906);">Styl</span>
<span class="t" style="left:566.0px;top:256.8px;font-size:9.5px;color:#6b6c7e;font-weight:700;transform:scaleX(0.897);">Source</span>
<span class="t" style="left:286.0px;top:295.0px;font-size:11.4px;color:#272833;transform:scaleX(1.008);">Artykuł. Wyświetl stronę.</span>
<span class="t" style="left:816.5px;top:160.8px;font-size:10.2px;color:#0b5fff;-webkit-text-stroke:0.36px #0b5fff;transform:scaleX(0.964);">Właściwości</span>
<span class="t" style="left:893.0px;top:160.8px;font-size:10.2px;color:#0b5fff;-webkit-text-stroke:0.36px #0b5fff;transform:scaleX(0.942);">Zwyczaje</span>
<span class="t" style="left:805.9px;top:205.1px;font-size:9.3px;color:#6b6c7e;-webkit-text-stroke:0.33px #6b6c7e;transform:scaleX(0.871);">PODSTAWOWE INFORMACJE</span>
<span class="t" style="left:805.9px;top:239.5px;font-size:9.3px;color:#6b6c7e;-webkit-text-stroke:0.33px #6b6c7e;transform:scaleX(0.877);">DOMYŚLNY SZABLON</span>
<span class="t" style="left:805.9px;top:273.7px;font-size:9.3px;color:#6b6c7e;-webkit-text-stroke:0.33px #6b6c7e;transform:scaleX(0.847);">WYŚWIETL STRONĘ</span>
<span class="t" style="left:805.3px;top:303.5px;font-size:10.7px;color:#6b6c7e;transform:scaleX(0.927);">Zmiana szablonu strony wyświetlania</span>
<span class="t" style="left:805.3px;top:318.4px;font-size:10.7px;color:#6b6c7e;transform:scaleX(0.928);">będzie miała wpływ na wszystkie wersje</span>
<span class="t" style="left:805.3px;top:333.3px;font-size:10.7px;color:#6b6c7e;transform:scaleX(0.935);">artykułów zawartości sieci Web, nawet</span>
<span class="t" style="left:805.3px;top:348.2px;font-size:10.7px;color:#6b6c7e;transform:scaleX(0.923);">podczas zapisywania go jako wersji</span>
<span class="t" style="left:805.3px;top:363.1px;font-size:10.7px;color:#6b6c7e;transform:scaleX(0.943);">roboczej.</span>
<span class="t" style="left:814.1px;top:393.5px;font-size:10.7px;color:#272833;transform:scaleX(0.947);">Specyficzny</span>
<span class="t" style="left:814.1px;top:428.0px;font-size:10.7px;color:#272833;transform:scaleX(0.953);">Strony &gt; Informacje</span>
<span class="t" style="left:814.1px;top:457.6px;font-size:10px;color:#6b6c7e;-webkit-text-stroke:0.35px #6b6c7e;transform:scaleX(1.035);">Podgląd</span>
<span class="t" style="left:805.9px;top:492.5px;font-size:9.3px;color:#6b6c7e;-webkit-text-stroke:0.33px #6b6c7e;transform:scaleX(0.888);">WYRÓŻNIONY OBRAZ</span>
<span class="t" style="left:805.9px;top:527.3px;font-size:9.3px;color:#6b6c7e;-webkit-text-stroke:0.33px #6b6c7e;transform:scaleX(0.837);">KATEGORYZACJA</span>
<span class="t" style="left:805.9px;top:561.8px;font-size:9.3px;color:#6b6c7e;-webkit-text-stroke:0.33px #6b6c7e;transform:scaleX(0.846);">PRZYJAZNY URL</span>
<span class="t" style="left:805.9px;top:596.3px;font-size:9.3px;color:#6b6c7e;-webkit-text-stroke:0.33px #6b6c7e;transform:scaleX(0.875);">ZAPLANUJ</span>
<span class="t" style="left:79.6px;top:11.9px;font-size:10.2px;color:#ececf0;transform:scaleX(0.850);-webkit-text-stroke:.2px #ececf0;">Użytkownicy i organizacje -</span>
<span class="t" style="left:209.2px;top:11.9px;font-size:10.2px;color:#ececf0;transform:scaleX(0.790);-webkit-text-stroke:.2px #ececf0;">CMS - Redakcja BIP</span>
<span class="t" style="left:338.8px;top:11.9px;font-size:10.2px;color:#ececf0;transform:scaleX(0.846);-webkit-text-stroke:.2px #ececf0;">Artykuł. Wyświetl stronę. - C</span>
<span class="t" style="left:185.0px;top:34.5px;font-size:10.4px;color:#a9a9b3;transform:scaleX(0.941);">https://bip-admin.</span>
<span class="t" style="left:260.0px;top:34.5px;font-size:10.4px;color:#ffffff;transform:scaleX(0.879);">um.warszawa.pl</span>
<span class="t" style="left:325.5px;top:34.5px;font-size:10.4px;color:#a9a9b3;transform:scaleX(0.897);">/group/gabinet-prezydenta/~/control_panel/manage?p_p_id=com_liferay_journal_web_portlet_JournalPortlet&amp;p_p_lifecycle=...</span>
<span class="t" style="left:780.7px;top:630.3px;font-size:9.3px;color:#7a7a85;transform:scaleX(0.821);">Resetuj</span>
<span class="t" style="left:911.4px;top:630.3px;font-size:9.3px;color:#ececf0;transform:scaleX(0.838);">100 %</span>
<span class="t" style="left:964.6px;top:630.3px;font-size:9.3px;color:#ececf0;transform:scaleX(0.858);">5 maj 12:36:04</span>
<span class="t" style="left:976.5px;top:59.4px;font-size:7px;color:#ffffff;font-weight:700;transform:scaleX(0.984);">272</span>
<span class="t" style="left:599.3px;top:229.3px;font-size:11.6px;color:#6b6c7e;font-weight:700;">B</span>
<span class="t" style="left:625.9px;top:228.5px;font-size:12.5px;color:#6b6c7e;font-style:italic;font-family:'Liberation Serif',serif;">I</span>
<span class="t" style="left:648.1px;top:229.7px;font-size:9.6px;color:#6b6c7e;">U</span>
<span class="t" style="left:671.3px;top:228.1px;font-size:14px;color:#6b6c7e;font-weight:700;">S</span>
<span class="t" style="left:695.7px;top:230.0px;font-size:9.5px;color:#6b6c7e;font-weight:700;transform:scaleX(0.906);">x</span>
<span class="t" style="left:701.0px;top:234.5px;font-size:6px;color:#6b6c7e;font-weight:700;transform:scaleX(0.957);">2</span>
<span class="t" style="left:719.5px;top:230.6px;font-size:9.5px;color:#6b6c7e;font-weight:700;transform:scaleX(0.906);">x</span>
<span class="t" style="left:724.8px;top:229.5px;font-size:6px;color:#6b6c7e;font-weight:700;transform:scaleX(1.077);">2</span>
<span class="t" style="left:564.4px;top:228.8px;font-size:9.9px;color:#6b6c7e;font-weight:700;">A</span>
<span class="t" style="left:286.2px;top:254.3px;font-size:12.6px;color:#555668;font-style:italic;-webkit-text-stroke:.35px #555668;">T</span>
<span class="t" style="left:365.0px;top:256.2px;font-size:7px;color:#555668;font-weight:700;transform:scaleX(0.771);">DIV</span>
<span class="t" style="left:941.9px;top:30.0px;font-size:8px;color:#ffffff;font-weight:700;transform:scaleX(1.033);font-family:'Liberation Serif',serif;">4</span>
<span class="t" style="left:962.4px;top:30.0px;font-size:8px;color:#ffffff;font-weight:700;transform:scaleX(0.942);font-family:'Liberation Serif',serif;">9+</span>
<span class="t" style="left:314.6px;top:255.7px;font-size:4.3px;color:#6b6c7e;font-weight:700;">1</span>
<span class="t" style="left:314.6px;top:260.0px;font-size:4.3px;color:#6b6c7e;font-weight:700;">2</span>
<span class="t" style="left:314.6px;top:264.3px;font-size:4.3px;color:#6b6c7e;font-weight:700;">3</span>
<div class="a" style="left:432px;top:8px;width:16px;height:16px;background:linear-gradient(90deg,rgba(43,43,53,0),#2b2b35 85%)"></div>
<div class="a" style="left:176px;top:8px;width:12px;height:16px;background:linear-gradient(90deg,rgba(86,86,94,0),#56565e 90%)"></div>
</body>
</html>
